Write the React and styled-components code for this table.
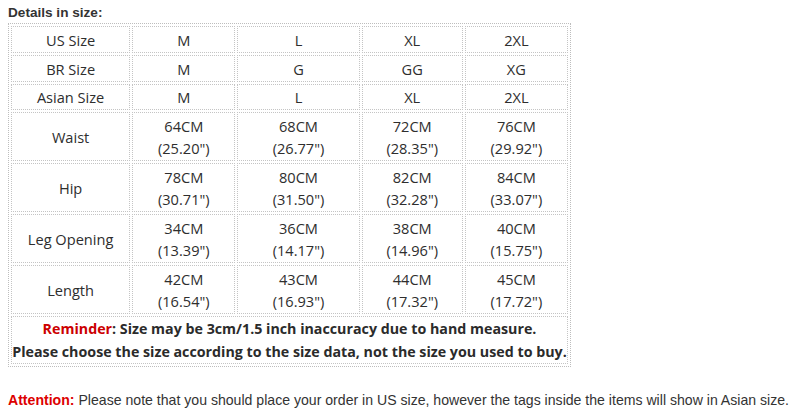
import React from "react";
import styled, { createGlobalStyle } from "styled-components";

const GlobalStyle = createGlobalStyle`
  html, body {
    margin: 0;
    padding: 0;
    background: #ffffff;
  }
  body {
    font-family: "Liberation Sans", Arial, sans-serif;
    color: #333333;
  }
`;

const Page = styled.div`
  width: 798px;
  height: 412px;
  padding: 4px 8px 0 8px;
  box-sizing: border-box;
  display: flex;
  flex-direction: column;
`;

const Heading = styled.div`
  font-family: "Liberation Sans", Arial, sans-serif;
  font-weight: bold;
  font-size: 13.6px;
  line-height: 17px;
  color: #333;
  margin-bottom: 2px;
`;

const SizeTable = styled.table`
  border: 1px dotted #bdbdbd;
  border-collapse: separate;
  border-spacing: 2px;
  table-layout: fixed;
  width: 563px;
`;

const Cell = styled.td`
  border: 1px dotted #c4c4c4;
  box-sizing: border-box;
  width: ${({ $w }) => $w}px;
  height: ${({ $h }) => $h || 27}px;
  padding: 0;
  text-align: center;
  vertical-align: middle;
  font-family: "Open Sans", "Segoe UI", sans-serif;
  font-size: 14.6px;
  line-height: 22px;
  color: #2e2e2e;
`;

const NoteCell = styled.td`
  border: 1px dotted #c4c4c4;
  box-sizing: border-box;
  height: 48px;
  padding: 0;
  text-align: center;
  vertical-align: middle;
  font-family: "Open Sans", "Segoe UI", sans-serif;
  font-weight: bold;
  font-size: 14.25px;
  line-height: 23px;
  color: #2b2b2b;
`;

const Red = styled.span`
  color: ${({ $tone }) => $tone || "#cc0000"};
  font-weight: bold;
`;

const Attention = styled.div`
  margin-top: 24px;
  font-family: "Liberation Sans", Arial, sans-serif;
  font-size: 14.1px;
  line-height: 18px;
  color: #333;
  white-space: nowrap;
`;

const widths = [119, 103, 122, 101, 103];

const simpleRows = [
  { label: "US Size", values: ["M", "L", "XL", "2XL"], h: 27 },
  { label: "BR Size", values: ["M", "G", "GG", "XG"], h: 27 },
  { label: "Asian Size", values: ["M", "L", "XL", "2XL"], h: 26 },
];

const measureRows = [
  { label: "Waist", values: [["64CM", '(25.20")'], ["68CM", '(26.77")'], ["72CM", '(28.35")'], ["76CM", '(29.92")']] },
  { label: "Hip", values: [["78CM", '(30.71")'], ["80CM", '(31.50")'], ["82CM", '(32.28")'], ["84CM", '(33.07")']] },
  { label: "Leg Opening", values: [["34CM", '(13.39")'], ["36CM", '(14.17")'], ["38CM", '(14.96")'], ["40CM", '(15.75")']] },
  { label: "Length", values: [["42CM", '(16.54")'], ["43CM", '(16.93")'], ["44CM", '(17.32")'], ["45CM", '(17.72")']] },
];

const App = () => {
  return (
    <Page>
      <GlobalStyle />
      <Heading>Details in size:</Heading>
      <SizeTable>
        <tbody>
          {simpleRows.map((row) => (
            <tr key={row.label}>
              <Cell $w={widths[0]} $h={row.h}>{row.label}</Cell>
              {row.values.map((v, i) => (
                <Cell key={i} $w={widths[i + 1]} $h={row.h}>{v}</Cell>
              ))}
            </tr>
          ))}
          {measureRows.map((row) => (
            <tr key={row.label}>
              <Cell $w={widths[0]} $h={49}>{row.label}</Cell>
              {row.values.map(([cm, inch], i) => (
                <Cell key={i} $w={widths[i + 1]} $h={49}>
                  {cm}
                  <br />
                  {inch}
                </Cell>
              ))}
            </tr>
          ))}
          <tr>
            <NoteCell colSpan={5}>
              <Red>Reminder</Red>: Size may be 3cm/1.5 inch inaccuracy due to hand measure.
              <br />
              Please choose the size according to the size data, not the size you used to buy.
            </NoteCell>
          </tr>
        </tbody>
      </SizeTable>
      <Attention>
        <Red $tone="#dd0000">Attention:</Red> Please note that you should place your order in US size, however the tags inside the items will show in Asian size.
      </Attention>
    </Page>
  );
};

export default App;
